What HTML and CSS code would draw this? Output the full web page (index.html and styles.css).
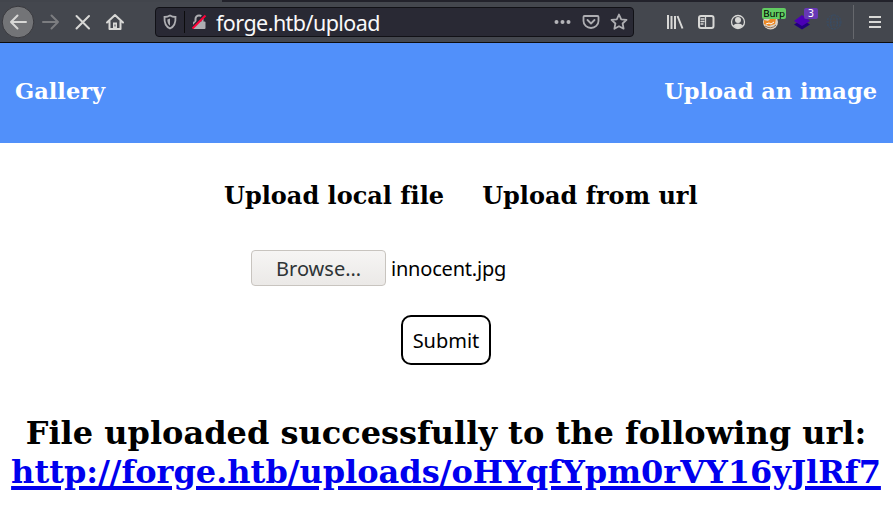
FILE: index.html
```html
<!DOCTYPE html>
<html lang="en">
<head>
<meta charset="utf-8">
<title>Upload an image</title>
<link rel="stylesheet" href="styles.css">
</head>
<body>
<div class="toolbar">
  <div class="tools nav">
    <svg class="icon" viewBox="0 0 32 32"><circle cx="16" cy="16" r="15.800" fill="#737477" stroke="#38383d"/><path d="M24 16H9M15.500 9.500L9 16l6.500 6.500" class="line"/></svg>
    <svg class="icon" viewBox="0 0 32 32"><path d="M9 16h15M17.500 9.500L24 16l-6.500 6.500" class="line dim"/></svg>
    <svg class="icon" viewBox="0 0 32 32"><path d="M10.500 10l12.500 12.500M23 10L10.500 22.500" class="line"/></svg>
    <svg class="icon" viewBox="0 0 32 32"><path d="M9 16.500L17 9l8 7.500M11.500 15.500V23h11v-7.500" class="line"/><path d="M15 23v-6.500h4V23" fill="#d8d8d6"/><path d="M17 18.500v2" stroke="#44474e"/></svg>
  </div>
  <div class="address">
    <svg class="shield" viewBox="0 0 14 16"><path d="M1.500 3C4 3 5.500 2.500 7 1.500 8.500 2.500 10 3 12.500 3c.3 5-1 9.500-5.500 11.500C2.500 12.500 1.200 8 1.500 3z" fill="none" stroke="#aeaeb2" stroke-width="1.800"/><path d="M7 4.500v7.200C4.900 10 4.400 8 4.300 5.400 5.300 5.200 6.200 5 7 4.500z" fill="#aeaeb2"/></svg>
    <span class="divider"></span>
    <svg class="lock" viewBox="0 0 16 16"><path d="M4.500 8V5a3.500 3.500 0 0 1 7 0v3" fill="none" stroke="#aeaeb2" stroke-width="2"/><rect x="2" y="7.500" width="12.500" height="7.500" rx="1" fill="#aeaeb2"/><path d="M1 13.500L13 1" stroke="#292934" stroke-width="2.500"/><path d="M1.500 14.500L14.500 1.500" stroke="#ff0039" stroke-width="2"/></svg>
    <span class="url">forge.htb/upload</span>
    <svg class="action" viewBox="0 0 28 28"><g fill="#b5b5b9"><circle cx="7.500" cy="14" r="2"/><circle cx="13.500" cy="14" r="2"/><circle cx="19.500" cy="14" r="2"/></g></svg>
    <svg class="action" viewBox="0 0 28 28"><path d="M7.500 8h13q1 0 1 1v4a7.500 7 0 0 1-15 0V9q0-1 1-1z" class="line soft"/><path d="M10.500 12l3.500 3.500 3.500-3.500" class="line soft"/></svg>
    <svg class="action" viewBox="0 0 28 28"><path d="M14 6.500l2.200 4.800 5.300.6-3.900 3.600 1 5.200L14 18.200l-4.600 2.500 1-5.200-3.900-3.600 5.300-.6z" class="line soft"/></svg>
  </div>
  <div class="tools extras">
    <svg class="icon" viewBox="0 0 32 32"><path d="M10 9v14M13.500 10v13M17 10v13M19.500 10L24.500 22.500" class="line flat"/></svg>
    <svg class="icon" viewBox="0 0 32 32"><rect x="9" y="10" width="14.500" height="12" rx="2" class="line"/><path d="M15.500 10v12" class="line thin"/><path d="M11 13h3M11 15.500h3M11 18h2" class="line thin"/></svg>
    <svg class="icon" viewBox="0 0 32 32"><circle cx="16" cy="16" r="6.500" class="line thin"/><circle cx="16" cy="14" r="3" fill="#d8d8d6"/><path d="M11 19.500q2-2 5-2t5 2q-2 3-5 3t-5-3z" fill="#d8d8d6"/></svg>
    <div class="extension">
      <svg class="icon" viewBox="0 0 32 32"><circle cx="16.500" cy="16" r="7.500" fill="#ded2c3"/><path d="M10 14l4 1 2-2 6-1-1 6-6 2-5-2z" fill="#ee8926"/><path d="M12 18l3-1 2 1 3-2" stroke="#fff" fill="none"/><path d="M11 20q6 4 11-1" stroke="#90715b" fill="none"/></svg>
      <span class="badge burp">Burp</span>
    </div>
    <div class="extension">
      <svg class="icon" viewBox="0 0 32 32"><path d="M8 18.500l8 5 8-5-8-5z" fill="#22007c"/><path d="M8 15l8 5 8-5-8-6z" fill="#4b00b5"/></svg>
      <span class="badge count">3</span>
    </div>
    <svg class="icon globe" viewBox="0 0 32 32"><g fill="none" stroke="#394d65" stroke-dasharray="2 1"><circle cx="16" cy="16" r="7"/><ellipse cx="16" cy="16" rx="3.500" ry="7"/><path d="M9 13h14M9 16h14M9 19h14"/></g></svg>
  </div>
  <span class="separator"></span>
  <svg class="menu" viewBox="0 0 14 14"><path d="M1 2h12M1 7h12M1 12h12" class="line flat"/></svg>
</div>
<header class="banner">
  <a class="brand">Gallery</a>
  <a class="brand">Upload an image</a>
</header>
<main>
  <nav class="choices">
    <h2>Upload local file</h2>
    <h2>Upload from url</h2>
  </nav>
  <form class="form">
    <div class="file">
      <button type="button" class="browse"><span>Browse…</span></button>
      <span class="filename">innocent.jpg</span>
    </div>
    <button type="button" class="submit">Submit</button>
  </form>
  <h1>File uploaded successfully to the following url:<br><a class="result" href="#">http://forge.htb/uploads/oHYqfYpm0rVY16yJlRf7</a></h1>
</main>
</body>
</html>
```

FILE: styles.css
```css
* { box-sizing: border-box; }
body { margin: 0; background: #fff; color: #000; font-family: "DejaVu Serif", serif; overflow: hidden; }
svg { display: block; flex: none; }
.toolbar { display: flex; align-items: center; height: 43px; padding: 2px 0 0 2px; border-bottom: 1px solid #0c0c0d; background: linear-gradient(90deg, #42454c 222px, #22222b 222px) top / 100% 2px no-repeat, #44474e; }
.tools { display: flex; }
.nav { width: 153px; }
.icon { width: 32px; height: 32px; overflow: visible; }
.line { fill: none; stroke: #d8d8d6; stroke-width: 2; stroke-linecap: round; stroke-linejoin: round; }
.dim { stroke: #7c7d80; }
.soft { stroke: #aeaeb2; stroke-width: 1.8; }
.thin { stroke-width: 1.3; }
.flat { stroke-linecap: butt; }
.address { display: flex; align-items: center; width: 479px; height: 30px; padding: 0 0 0 7px; border: 1px solid #111116; border-radius: 4px; background: #292934; }
.shield { width: 14px; height: 16px; }
.divider { width: 1px; height: 22px; margin: 0 6px 0 7px; background: #0c0c0d; }
.lock { width: 16px; height: 16px; }
.url { flex: 1; margin-left: 9px; padding-top: 2px; color: #f9f9fa; font: 21.5px/28px "Noto Sans", sans-serif; letter-spacing: -0.55px; white-space: nowrap; }
.action { width: 28px; height: 28px; }
.extras { margin-left: 24px; }
.extension { position: relative; }
.badge { position: absolute; top: 2px; height: 11px; border-radius: 2px; text-align: center; font: 10px/11px "DejaVu Sans", sans-serif; }
.burp { left: 8px; width: 24px; background: #62cc62; color: #000; font-size: 9.5px; letter-spacing: -0.2px; }
.count { left: 18px; width: 14px; background: #6738b5; color: #fff; }
.separator { width: 1px; height: 34px; margin-left: 3px; background: #66686d; }
.menu { width: 14px; height: 14px; margin-left: 14px; }
.banner { display: flex; justify-content: space-between; height: 100px; padding: 34px 16px 0 15px; background: #5190fa; }
.brand { color: #fff; font-size: 22.5px; font-weight: bold; line-height: 28px; }
.choices { display: flex; gap: 38px; padding: 39px 0 0 224px; }
h2 { margin: 0; font-size: 24px; line-height: 28px; white-space: nowrap; font-variant-ligatures: none; }
.form { margin: 0; font-family: "Noto Sans", sans-serif; font-size: 20px; }
.file { display: flex; align-items: center; height: 36px; margin: 40px 0 0 251px; }
.browse { width: 135px; height: 36px; padding: 0; border: 1px solid #c8c4bf; border-radius: 4px; background: linear-gradient(#f6f5f4, #ebe9e7); color: #2e3436; font: inherit; }
.filename { margin-left: 5px; letter-spacing: -0.2px; }
.submit { display: block; width: 90px; height: 50px; margin: 29px 0 0 401px; padding: 0; border: 2px solid #000; border-radius: 10px; background: #fff; color: #000; font: inherit; }
h1 { margin: 49px 1px 0 0; font-size: 32px; line-height: 39px; text-align: center; white-space: nowrap; }
.result { color: #00e; text-decoration-thickness: 4px; text-underline-offset: 3px; }
```
